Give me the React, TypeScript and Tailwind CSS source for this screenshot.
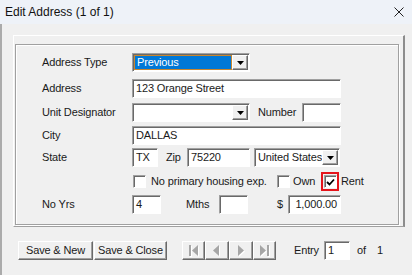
import React from 'react';

const sunken =
  'border border-t-[#a0a0a0] border-l-[#a0a0a0] border-b-white border-r-white shadow-[inset_1px_1px_0_#696969] bg-white';
const raised =
  'border border-t-white border-l-white border-b-[#696969] border-r-[#696969] shadow-[inset_-1px_-1px_0_#a0a0a0] bg-[#f0f0f0]';

function TextBox({ w, value = '', right = false }: { w: string; value?: string; right?: boolean }) {
  return (
    <div className={`${sunken} ${w} h-[19px] flex items-center ${right ? 'justify-end pr-[3px]' : 'pl-[3px]'}`}>
      <span className="leading-none">{value}</span>
    </div>
  );
}

function DropArrow() {
  return (
    <div className={`${raised} w-[16px] shrink-0 h-full flex items-center justify-center`}>
      <svg width="7" height="4" viewBox="0 0 7 4">
        <polygon points="0,0 7,0 3.5,4" fill="#000" />
      </svg>
    </div>
  );
}

function Combo({ w, value = '', focused = false }: { w: string; value?: string; focused?: boolean }) {
  return (
    <div className={`${sunken} ${w} h-[19px] flex p-px`}>
      {focused ? (
        <div className="flex-1 min-w-0 bg-[#0078d7] border border-[#c8862f] text-white flex items-center pl-[2px]">
          <span className="leading-none">{value}</span>
        </div>
      ) : (
        <div className="flex-1 min-w-0 overflow-hidden flex items-center pl-[2px]">
          <span className="leading-none">{value}</span>
        </div>
      )}
      <DropArrow />
    </div>
  );
}

function Check({ checked = false }: { checked?: boolean }) {
  return (
    <div className={`${sunken} w-[13px] h-[13px] flex items-center justify-center`}>
      {checked && (
        <svg width="9" height="8" viewBox="0 0 9 8">
          <path d="M1 4 L3.5 6.5 L8 1.5" stroke="#000" strokeWidth="1.8" fill="none" />
        </svg>
      )}
    </div>
  );
}

function NavIcon({ kind }: { kind: 'first' | 'prev' | 'next' | 'last' }) {
  const shapes = (fill: string) => {
    if (kind === 'first')
      return (
        <>
          <rect x="1" y="1" width="2" height="11" fill={fill} />
          <polygon points="10,1 10,12 4,6.5" fill={fill} />
        </>
      );
    if (kind === 'prev') return <polygon points="8,1 8,12 2,6.5" fill={fill} />;
    if (kind === 'next') return <polygon points="3,1 3,12 9,6.5" fill={fill} />;
    return (
      <>
        <polygon points="1,1 1,12 7,6.5" fill={fill} />
        <rect x="8" y="1" width="2" height="11" fill={fill} />
      </>
    );
  };
  return (
    <svg width="12" height="14" viewBox="0 0 12 14">
      <g transform="translate(1,1)">{shapes('#ffffff')}</g>
      {shapes('#a6a6a6')}
    </svg>
  );
}

export default function App() {
  return (
    <div className="w-[412px] h-[275px] bg-[#f0f0f0] font-['Liberation_Sans',Arial,sans-serif] text-[11px] tracking-[-0.15px] whitespace-nowrap text-[#1a1a1a] flex flex-col overflow-hidden">
      <div className="h-[24px] bg-[#eef2f8] flex items-center justify-between pl-[5px] pr-[8px]">
        <span className="text-[12px] tracking-normal text-[#111]">Edit Address (1 of 1)</span>
        <svg width="10" height="10" viewBox="0 0 10 10">
          <path d="M0.5 0.5 L9.5 9.5 M9.5 0.5 L0.5 9.5" stroke="#222" strokeWidth="1" />
        </svg>
      </div>

      <div className="flex-1 border-l-2 border-[#ababab] flex flex-col pl-[11px] pt-[11px]">
        <div className="w-[392px] h-[192px] border-t border-l border-white border-r-2 border-r-[#8c8c8c] border-b border-b-[#a0a0a0] pl-px pt-[8px] pr-[4px] pb-px flex flex-col">
          <div className="flex-1 border border-[#a0a0a0] shadow-[inset_1px_1px_0_#fff,1px_1px_0_#fff] pl-[26px] pt-[8px] flex flex-col">
            <div className="flex items-center h-[19px]">
              <span className="w-[90px]">Address Type</span>
              <Combo w="w-[118px]" value="Previous" focused />
            </div>

            <div className="flex items-center h-[19px] mt-[7px]">
              <span className="w-[90px]">Address</span>
              <TextBox w="w-[209px]" value="123 Orange Street" />
            </div>

            <div className="flex items-center h-[19px] mt-[5px]">
              <span className="w-[90px]">Unit Designator</span>
              <Combo w="w-[118px]" />
              <span className="ml-[8px] w-[44px]">Number</span>
              <TextBox w="w-[39px]" />
            </div>

            <div className="flex items-center h-[19px] mt-[4px]">
              <span className="w-[90px]">City</span>
              <TextBox w="w-[209px]" value="DALLAS" />
            </div>

            <div className="flex items-center h-[19px] mt-[3px]">
              <span className="w-[90px]">State</span>
              <TextBox w="w-[26px]" value="TX" />
              <span className="ml-[8px] w-[21px]">Zip</span>
              <TextBox w="w-[63px]" value="75220" />
              <div className="ml-[4px]">
                <Combo w="w-[86px]" value="United States" />
              </div>
            </div>

            <div className="flex items-center h-[19px] mt-[5px]">
              <span className="w-[90px]" />
              <div className="ml-px">
                <Check />
              </div>
              <span className="ml-[5px] w-[126px]">No primary housing exp.</span>
              <Check />
              <span className="ml-[3px] w-[28px]">Own</span>
              <div className="border-2 border-[#e5141b] w-[18px] h-[19px] flex items-center justify-center">
                <Check checked />
              </div>
              <span className="ml-[2px]">Rent</span>
            </div>

            <div className="flex items-center h-[19px] mt-[4px]">
              <span className="w-[90px]">No Yrs</span>
              <TextBox w="w-[29px]" value="4" />
              <span className="ml-[25px] w-[33px]">Mths</span>
              <TextBox w="w-[29px]" />
              <span className="ml-[29px] w-[11px]">$</span>
              <TextBox w="w-[53px]" value="1,000.00" right />
            </div>
          </div>
        </div>

        <div className="mt-[14px] flex items-center h-[19px]">
          <button type="button" className={`${raised} ml-[5px] w-[75px] h-[19px] text-[11px]`}>
            Save &amp; New
          </button>
          <button type="button" className={`${raised} ml-px w-[73px] h-[19px] text-[11px]`}>
            Save &amp; Close
          </button>
          <div className="ml-[15px] flex">
            {(['first', 'prev', 'next', 'last'] as const).map((k, i) => (
              <div
                key={k}
                className={`${raised} ${i === 0 || i === 3 ? 'w-[23px]' : 'w-[24px]'} h-[19px] flex items-center justify-center`}
              >
                <NavIcon kind={k} />
              </div>
            ))}
          </div>
          <span className="ml-[18px] w-[30px]">Entry</span>
          <TextBox w="w-[26px]" value="1" />
          <span className="ml-[7px] w-[20px]">of</span>
          <span>1</span>
        </div>
      </div>
    </div>
  );
}
